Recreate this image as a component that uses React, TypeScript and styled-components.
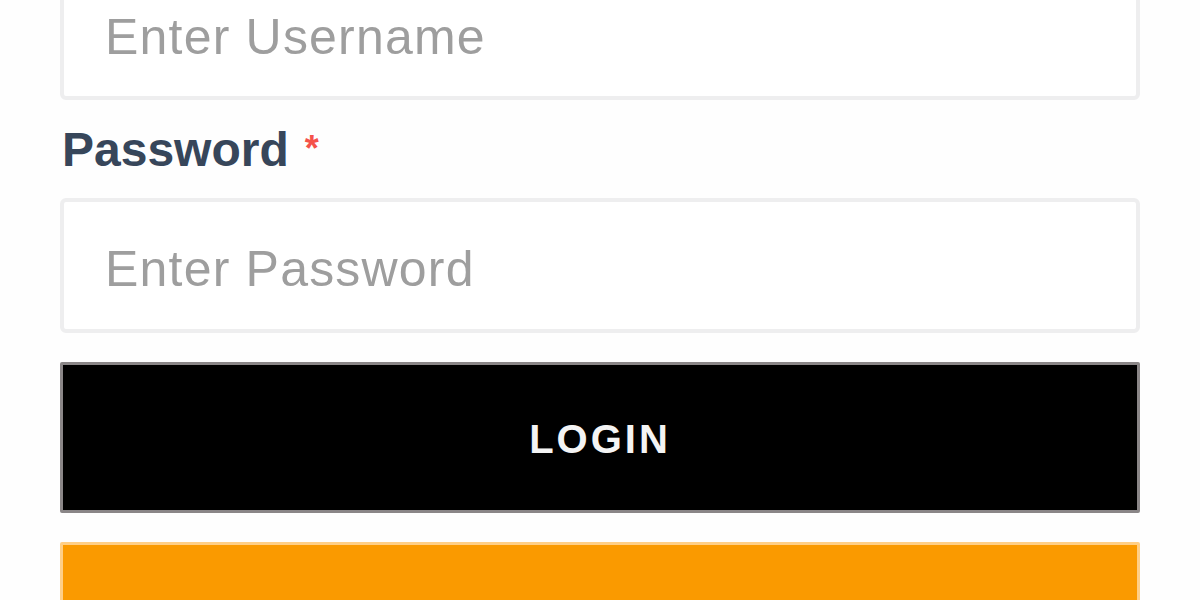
import React from "react";
import styled, { createGlobalStyle } from "styled-components";

const Global = createGlobalStyle`
  html, body { margin: 0; padding: 0; background: #fefefe; }
  body { font-family: "Liberation Sans", Arial, sans-serif; overflow: hidden; }
  input::placeholder { color: #9e9e9e; opacity: 1; }
`;

const Page = styled.div`
  width: 1200px;
  height: 600px;
  overflow: hidden;
  background: #fefefe;
`;

const Form = styled.form`
  display: flex;
  flex-direction: column;
  width: 1080px;
  margin: -35px 0 0 60px;
`;

const Label = styled.label`
  display: flex;
  align-items: flex-start;
  margin: 21px 0 19px 2px;
  font-size: 48px;
  line-height: 1.2;
  font-weight: 700;
  color: #37465a;
`;

const Star = styled.span`
  color: #f5524a;
  font-size: 36px;
  line-height: 1;
  margin: 10px 0 0 16px;
`;

const Input = styled.input`
  box-sizing: border-box;
  width: 100%;
  height: 135px;
  border: 4px solid #eeeeef;
  border-radius: 6px;
  background: #fff;
  padding: 8px 0 0 41px;
  font-family: "Liberation Sans", Arial, sans-serif;
  font-size: 50px;
  letter-spacing: 1.2px;
  color: #333;
  outline: none;
`;

const Button = styled.button<{ $variant: "dark" | "orange" }>`
  box-sizing: border-box;
  width: 100%;
  height: 151px;
  margin-top: 29px;
  border: 3px solid ${(p) => (p.$variant === "dark" ? "#8a8687" : "#ffcf86")};
  border-radius: 2px;
  background: ${(p) => (p.$variant === "dark" ? "#000" : "#fa9a00")};
  color: #f4f4f4;
  font-family: "Liberation Sans", Arial, sans-serif;
  font-size: 40px;
  font-weight: 700;
  letter-spacing: 3px;
  padding: 4px 0 0 0;
  cursor: pointer;
`;

export default function App() {
  return (
    <Page>
      <Global />
      <Form onSubmit={(e) => e.preventDefault()}>
        <Input type="text" placeholder="Enter Username" />
        <Label>
          Password<Star>*</Star>
        </Label>
        <Input type="password" placeholder="Enter Password" />
        <Button $variant="dark" type="submit">LOGIN</Button>
        <Button $variant="orange" type="button"></Button>
      </Form>
    </Page>
  );
}
